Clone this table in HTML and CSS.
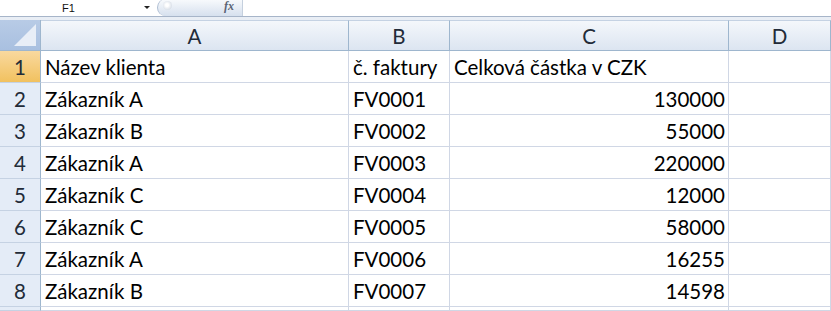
FILE: index.html
```html
<!DOCTYPE html>
<html>
<head>
<meta charset="utf-8">
<link rel="stylesheet" href="styles.css">
</head>
<body>
<div class="topbar">
  <div class="namebox"><span class="cellref">F1</span><span class="arrow"></span></div>
  <div class="fxbox"><span class="knob"></span><span class="fx">fx</span></div>
</div>
<div class="gap"></div>
<div class="sheet">
  <div class="corner"><span class="tri"></span></div>
  <div class="colh">A</div>
  <div class="colh">B</div>
  <div class="colh">C</div>
  <div class="colh">D</div>

  <div class="rowh sel">1</div><div class="cell">Název klienta</div><div class="cell">č. faktury</div><div class="cell">Celková částka v CZK</div><div class="cell"></div>
  <div class="rowh">2</div><div class="cell">Zákazník A</div><div class="cell">FV0001</div><div class="cell num">130000</div><div class="cell"></div>
  <div class="rowh">3</div><div class="cell">Zákazník B</div><div class="cell">FV0002</div><div class="cell num">55000</div><div class="cell"></div>
  <div class="rowh">4</div><div class="cell">Zákazník A</div><div class="cell">FV0003</div><div class="cell num">220000</div><div class="cell"></div>
  <div class="rowh">5</div><div class="cell">Zákazník C</div><div class="cell">FV0004</div><div class="cell num">12000</div><div class="cell"></div>
  <div class="rowh">6</div><div class="cell">Zákazník C</div><div class="cell">FV0005</div><div class="cell num">58000</div><div class="cell"></div>
  <div class="rowh">7</div><div class="cell">Zákazník A</div><div class="cell">FV0006</div><div class="cell num">16255</div><div class="cell"></div>
  <div class="rowh">8</div><div class="cell">Zákazník B</div><div class="cell">FV0007</div><div class="cell num">14598</div><div class="cell"></div>
  <div class="rowh"></div><div class="cell"></div><div class="cell"></div><div class="cell"></div><div class="cell"></div>
</div>
</body>
</html>
```

FILE: styles.css
```css
html, body {
  margin: 0;
  padding: 0;
  background: #ffffff;
  overflow: hidden;
  width: 831px;
  height: 311px;
}
body {
  font-family: Lato, "Open Sans", sans-serif;
}
.topbar {
  height: 16px;
  background: #ffffff;
  border-bottom: 1px solid #a7b5c9;
  display: flex;
  align-items: stretch;
  position: relative;
}
.namebox {
  width: 157px;
  display: flex;
  align-items: center;
  position: relative;
}
.cellref {
  margin-left: 62px;
  font-family: "Liberation Sans", Arial, sans-serif;
  font-size: 11px;
  color: #111;
}
.arrow {
  position: absolute;
  left: 144px;
  top: 6px;
  width: 0;
  height: 0;
  border-left: 3px solid transparent;
  border-right: 3px solid transparent;
  border-top: 3px solid #222;
}
.fxbox {
  width: 86px;
  height: 17px;
  margin-top: -1px;
  border-radius: 10px 0 0 10px;
  background: linear-gradient(#f9fbfd, #d6e0ee);
  border-left: 1px solid #aebdd2;
  border-right: 1px solid #c5d0de;
  position: relative;
  box-sizing: border-box;
}
.knob {
  position: absolute;
  left: 5px;
  top: 2px;
  width: 9px;
  height: 9px;
  border-radius: 50%;
  background: radial-gradient(circle at 45% 45%, #ffffff 20%, #c3cddb);
}
.fx {
  position: absolute;
  right: 8px;
  top: 0px;
  font-family: "Liberation Serif", serif;
  font-style: italic;
  font-weight: bold;
  font-size: 12px;
  color: #5b6475;
}
.gap {
  height: 3px;
  background: #e9eef5;
}
.sheet {
  display: grid;
  grid-template-columns: 41px 308px 101px 279px 102px;
  grid-template-rows: 31px repeat(8, 32px) 4px;
}
.corner {
  background: linear-gradient(#b8cbe6, #a9c0e0);
  border-right: 1px solid #9eb6ce;
  border-bottom: 1px solid #9eb6ce;
  position: relative;
  overflow: hidden;
}
.tri {
  position: absolute;
  right: 4px;
  bottom: 4px;
  width: 0;
  height: 0;
  border-left: 22px solid transparent;
  border-bottom: 22px solid #e8eef7;
}
.colh {
  background: linear-gradient(#f4f7fb, #dce5f1);
  border-right: 1px solid #9eb6ce;
  border-bottom: 1px solid #9eb6ce;
  border-top: 1px solid #c5d2e3;
  display: flex;
  align-items: center;
  justify-content: center;
  font-size: 20.5px;
  color: #222b38;
}
.rowh {
  background: #e4ecf7;
  border-right: 1px solid #9eb6ce;
  border-bottom: 1px solid #c5d2e3;
  display: flex;
  align-items: center;
  justify-content: center;
  font-size: 20.5px;
  color: #222b38;
}
.rowh.sel {
  background: linear-gradient(#f9d99f, #f1c15f);
}
.cell {
  border-right: 1px solid #d0d7e5;
  border-bottom: 1px solid #d0d7e5;
  display: flex;
  align-items: center;
  padding: 1px 3px 0 4px;
  font-size: 20.5px;
  color: #000;
  white-space: nowrap;
  overflow: hidden;
}
.cell.num {
  justify-content: flex-end;
}
```
